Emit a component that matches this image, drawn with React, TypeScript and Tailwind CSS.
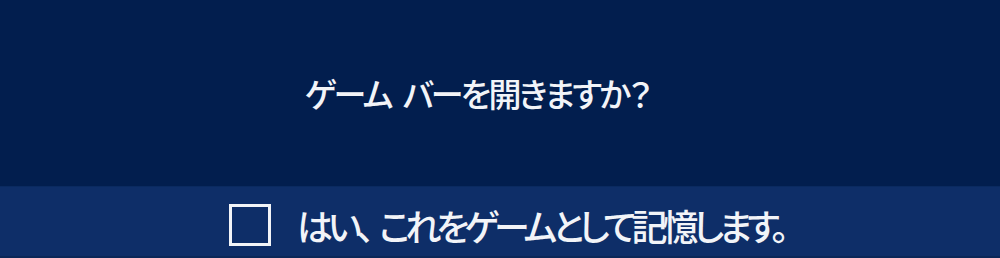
export default function App() {
  return (
    <div
      className="flex h-[258px] w-[1000px] flex-col bg-[#021e4e] text-[#f2f4f8]"
      style={{ fontFamily: '"Noto Sans CJK JP", "Noto Sans", sans-serif', fontFeatureSettings: '"palt"' }}
    >
      <div className="flex h-[186px] items-center justify-center pr-[46px]">
        <p className="flex gap-[12px] text-[33px] font-medium leading-none tracking-[-2.8px]">
          <span>ゲーム</span>
          <span>バーを開きますか？</span>
        </p>
      </div>
      <div className="flex h-[70px] items-center justify-center border-t border-[#0a2a60] bg-[#0e2e68] pl-[13px] pt-[6px]">
        <span className="mr-[26px] h-[42px] w-[42px] border-[3px] border-[#f2f4f8]" />
        <span className="flex text-[36px] font-medium leading-none tracking-[-5px]">
          <span className="mr-[9px]">はい、</span>
          <span>これをゲームとして記憶します。</span>
        </span>
      </div>
      <div className="h-[2px] bg-[#0b2758]" />
    </div>
  );
}
